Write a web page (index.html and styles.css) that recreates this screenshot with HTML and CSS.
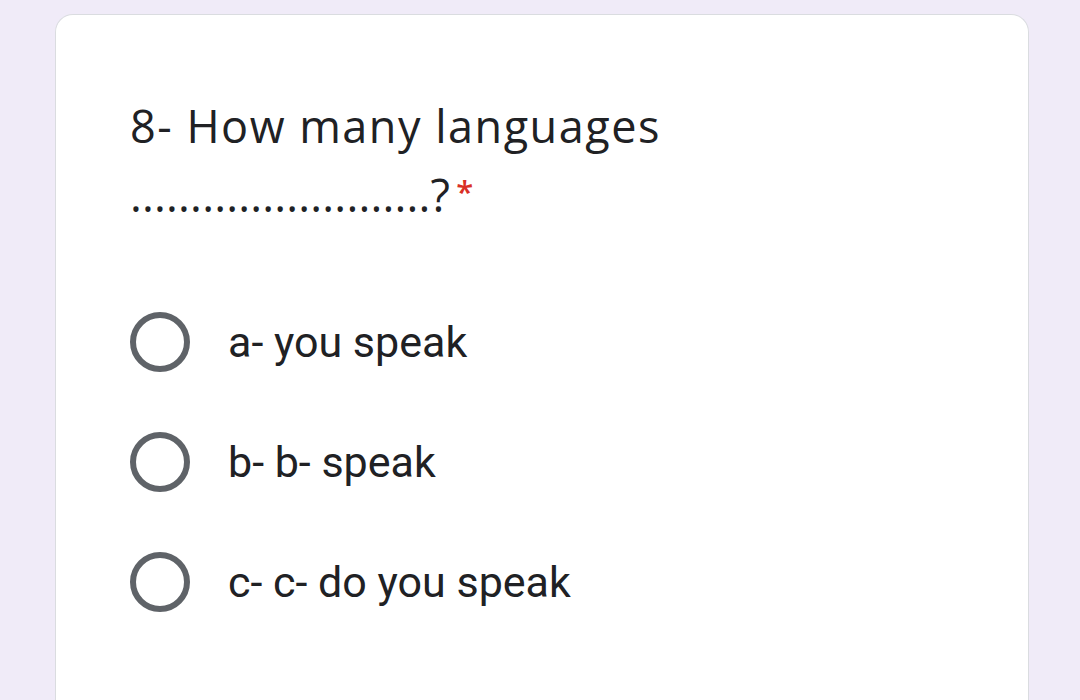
FILE: index.html
```html
<!DOCTYPE html>
<html>
<head>
<meta charset="utf-8">
<link rel="stylesheet" href="styles.css">
</head>
<body>
<div class="card">
  <div class="title">
    <div class="line first">8- How many languages</div>
    <div class="line second">.........................?<span class="req">*</span></div>
  </div>
  <div class="options">
    <div class="opt"><span class="radio"></span><span class="label">a- you speak</span></div>
    <div class="opt"><span class="radio"></span><span class="label">b- b- speak</span></div>
    <div class="opt"><span class="radio"></span><span class="label">c- c- do you speak</span></div>
  </div>
</div>
</body>
</html>
```
FILE: styles.css
```css
html, body {
  margin: 0;
  padding: 0;
  background: #f0ebf8;
  height: 700px;
  overflow: hidden;
}
.card {
  margin: 14px 0 0 55px;
  width: 974px;
  height: 686px;
  background: #fff;
  border: 1px solid #dadce0;
  border-bottom: none;
  border-radius: 18px 18px 0 0;
  box-sizing: border-box;
  padding: 76px 0 0 74px;
}
.title {
  font-family: "Open Sans", "Lato", sans-serif;
  font-size: 45px;
  line-height: 69px;
  color: #202124;
}
.first {
  letter-spacing: 1.5px;
}
.second {
  letter-spacing: 0.2px;
  height: 69px;
}
.req {
  color: #d93025;
  font-size: 31px;
  font-weight: 600;
  line-height: 0;
  margin-left: 6px;
  vertical-align: 9px;
}
.options {
  margin-top: 53px;
  display: flex;
  flex-direction: column;
}
.opt {
  height: 120px;
  display: flex;
  align-items: center;
  gap: 38px;
}
.radio {
  width: 60px;
  height: 60px;
  box-sizing: border-box;
  border: 6px solid #5f6368;
  border-radius: 50%;
  flex: none;
}
.label {
  font-family: "Roboto", sans-serif;
  font-size: 43px;
  color: #202124;
  line-height: 48px;
}
```
